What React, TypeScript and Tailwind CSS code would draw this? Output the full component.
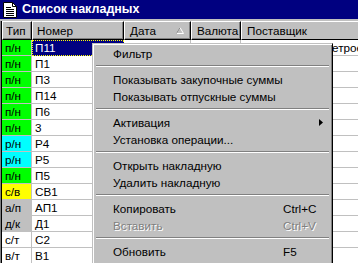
import React from 'react';

type Row = { type: string; num: string; bg: string; supplier?: string };

const ROWS: Row[] = [
  { type: 'п/н', num: 'П11', bg: 'bg-[#00ff00]', supplier: 'Торговый дом Петроем' },
  { type: 'п/н', num: 'П1', bg: 'bg-[#00ff00]' },
  { type: 'п/н', num: 'П3', bg: 'bg-[#00ff00]' },
  { type: 'п/н', num: 'П14', bg: 'bg-[#00ff00]' },
  { type: 'п/н', num: 'П6', bg: 'bg-[#00ff00]' },
  { type: 'п/н', num: '3', bg: 'bg-[#00ff00]' },
  { type: 'р/н', num: 'Р4', bg: 'bg-[#00ffff]' },
  { type: 'р/н', num: 'Р5', bg: 'bg-[#00ffff]' },
  { type: 'п/н', num: 'П5', bg: 'bg-[#00ff00]' },
  { type: 'с/в', num: 'СВ1', bg: 'bg-[#ffff00]' },
  { type: 'а/п', num: 'АП1', bg: 'bg-[#c0c0c0]' },
  { type: 'д/к', num: 'Д1', bg: 'bg-[#c0c0c0]' },
  { type: 'с/т', num: 'С2', bg: 'bg-white' },
  { type: 'в/т', num: 'В1', bg: 'bg-white' },
];

const COLS = 'grid grid-cols-[30px_92px_67px_50px_1fr]';

const HeaderCell: React.FC<{ children?: React.ReactNode; className?: string }> = ({ children, className = '' }) => (
  <div
    className={`flex items-center h-full pl-[3px] bg-[#c0c0c0] border-t border-l border-white border-r border-b border-r-black border-b-black shadow-[inset_-1px_-1px_#808080] ${className}`}
  >
    {children}
  </div>
);

type MenuEntry =
  | { sep: true }
  | { label: string; shortcut?: string; disabled?: boolean; submenu?: boolean };

const MENU: MenuEntry[] = [
  { label: 'Фильтр' },
  { sep: true },
  { label: 'Показывать закупочные суммы' },
  { label: 'Показывать отпускные суммы' },
  { sep: true },
  { label: 'Активация', submenu: true },
  { label: 'Установка операции...' },
  { sep: true },
  { label: 'Открыть накладную' },
  { label: 'Удалить накладную' },
  { sep: true },
  { label: 'Копировать', shortcut: 'Ctrl+C' },
  { label: 'Вставить', shortcut: 'Ctrl+V', disabled: true },
  { sep: true },
  { label: 'Обновить', shortcut: 'F5' },
];

const DocIcon = () => (
  <svg width="14" height="16" viewBox="0 0 14 16" className="shrink-0">
    <path d="M0.5 0.5 H9.5 L13.5 4.5 V15.5 H0.5 Z" fill="#fff" stroke="#000" />
    <path d="M9.5 0.5 V4.5 H13.5" fill="none" stroke="#000" />
    <path d="M3 5.5 H8 M3 7.5 H11 M3 9.5 H11 M3 11.5 H11 M3 13.5 H11" stroke="#000" />
  </svg>
);

export default function App() {
  return (
    <div
      className="relative w-[358px] h-[263px] overflow-hidden bg-[#c0c0c0] text-[11.7px] leading-none text-black"
      style={{ fontFamily: '"Liberation Sans", Arial, sans-serif' }}
    >
      {/* title bar */}
      <div className="h-[19px] bg-[#000080] flex items-center pl-[3px] gap-[5px]">
        <DocIcon />
        <span className="text-white font-bold text-[12.5px]">Список накладных</span>
      </div>
      <div className="h-[2px]" />

      {/* grid */}
      <div className="flex">
        <div className="w-[2px] border-l border-l-[#808080] border-r border-r-black h-[250px]" />
        <div className="flex-1">
          <div className={`${COLS} h-[19px]`}>
            <HeaderCell>Тип</HeaderCell>
            <HeaderCell className="pl-[4px]">Номер</HeaderCell>
            <HeaderCell className="pl-[5px] justify-between pr-[6px]">
              <span>Дата</span>
              <svg width="8" height="7" viewBox="0 0 8 7">
                <path d="M4 0.5 L7.5 6.5 H0.5 Z" fill="none" stroke="#fff" />
                <path d="M4 0.5 L0.5 6.5" stroke="#808080" />
              </svg>
            </HeaderCell>
            <HeaderCell className="pl-[5px]">Валюта</HeaderCell>
            <HeaderCell className="pl-[5px] border-r-0 shadow-none">Поставщик</HeaderCell>
          </div>
          {ROWS.map((r, i) => (
            <div key={i} className={`${COLS} h-[16px]`}>
              <div className={`${r.bg} border-r border-b border-[#c0c0c0] pl-[3px] flex items-center`}>{r.type}</div>
              {i === 0 ? (
                <div className="bg-[#000080] text-white border border-dotted border-[#ffff00] pl-[2px] flex items-center">
                  {r.num}
                </div>
              ) : (
                <div className="bg-white border-r border-b border-[#c0c0c0] pl-[3px] flex items-center">{r.num}</div>
              )}
              <div className="bg-white border-r border-b border-[#c0c0c0]" />
              <div className="bg-white border-r border-b border-[#c0c0c0]" />
              <div className="bg-white border-b border-[#c0c0c0] pl-[4px] flex items-center whitespace-nowrap overflow-hidden">
                {r.supplier}
              </div>
            </div>
          ))}
        </div>
      </div>

      {/* context menu */}
      <div className="absolute left-[92px] top-[43px] w-[241px] h-[240px] bg-[#c0c0c0] border border-t-[#c0c0c0] border-l-[#c0c0c0] border-r-black border-b-black shadow-[inset_1px_1px_#fff,inset_-1px_-1px_#808080] p-[1px]">
        {MENU.map((m, i) =>
          'sep' in m ? (
            <div key={i} className="h-[9px] px-[2px] pt-[3px]">
              <div className="border-t border-t-[#808080] border-b border-b-white" />
            </div>
          ) : (
            <div key={i} className="h-[17px] grid grid-cols-[170px_1fr] items-center pl-[19px] pr-[8px]">
              <span className={m.disabled ? 'text-[#808080] [text-shadow:1px_1px_0_#fff]' : ''}>{m.label}</span>
              <span className={`flex justify-between items-center ${m.disabled ? 'text-[#808080] [text-shadow:1px_1px_0_#fff]' : ''}`}>
                <span>{m.shortcut}</span>
                {m.submenu && (
                  <svg width="4" height="7" viewBox="0 0 4 7">
                    <path d="M0 0 L4 3.5 L0 7 Z" fill="#000" />
                  </svg>
                )}
              </span>
            </div>
          )
        )}
      </div>
    </div>
  );
}
